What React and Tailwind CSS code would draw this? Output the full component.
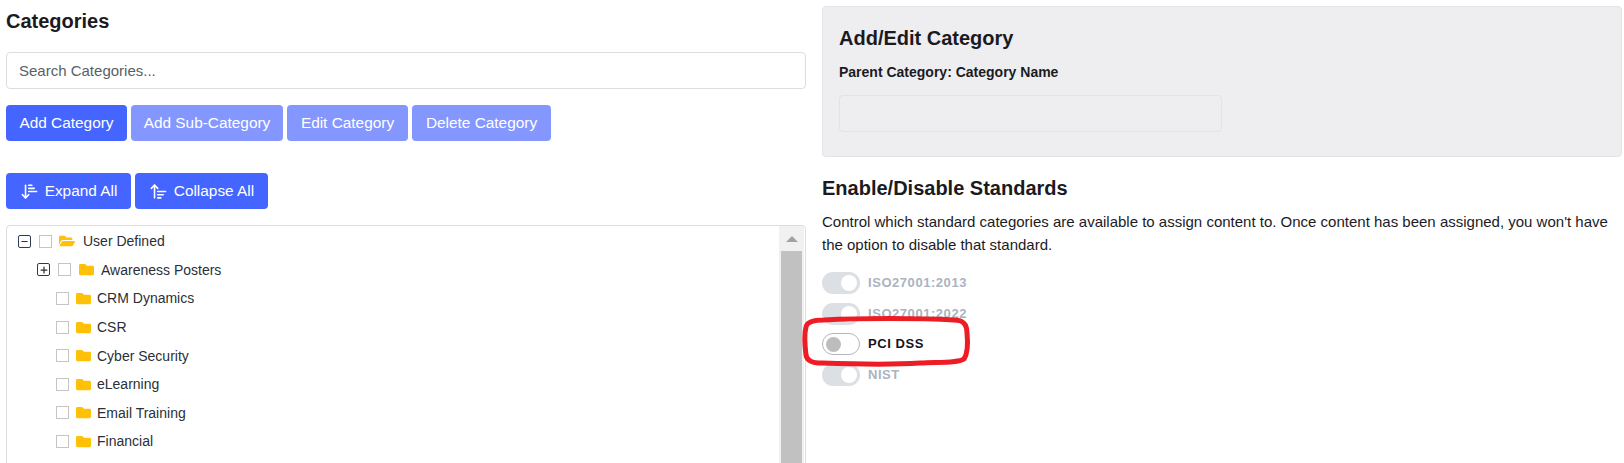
import React from "react";
import { ArrowDownNarrowWide, ArrowUpWideNarrow, Minus, Plus } from "lucide-react";
import { FaFolder, FaFolderOpen } from "react-icons/fa";

const items = ["CRM Dynamics", "CSR", "Cyber Security", "eLearning", "Email Training", "Financial"];
const standards = [
  { name: "ISO27001:2013", on: true },
  { name: "ISO27001:2022", on: true },
  { name: "PCI DSS", on: false },
  { name: "NIST", on: true },
];

const Btn = ({ children, faded, className }) => (
  <button
    className={`h-9 rounded text-white text-[15.4px] flex items-center justify-center gap-1.5 ${
      faded ? "bg-[#8497ff]" : "bg-[#4465ff]"
    } ${className}`}
  >
    {children}
  </button>
);

const Box = ({ className = "" }) => (
  <span className={`w-[13px] h-[13px] border border-[#c4c4c4] bg-white shrink-0 ${className}`} />
);

const Toggler = ({ open }) => (
  <span className="w-[13px] h-[13px] border border-[#2f3b52] rounded-[2px] flex items-center justify-center shrink-0">
    {open ? <Minus size={9} strokeWidth={3} /> : <Plus size={10} strokeWidth={3} />}
  </span>
);

const Standard = ({ name, on }) => (
  <div className="flex items-center gap-2 h-[22px]">
    {on ? (
      <span className="w-[38px] h-[22px] rounded-full bg-[#dcdfe4] flex items-center justify-end pr-[3px]">
        <span className="w-4 h-4 rounded-full bg-white" />
      </span>
    ) : (
      <span className="w-[38px] h-[22px] rounded-full bg-white border border-[#b4b7bd] flex items-center pl-[3px]">
        <span className="w-[15px] h-[15px] rounded-full bg-[#bdbdbd]" />
      </span>
    )}
    <span className={`text-[13px] font-bold tracking-[0.55px] ${on ? "text-[#aab4c1]" : "text-[#14141f]"}`}>{name}</span>
  </div>
);

export default function App() {
  return (
    <div className="relative h-[463px] overflow-hidden bg-white text-[#1b1b1f] font-['Liberation_Sans',Arial,sans-serif] flex gap-4 pl-1.5 pr-0.5 pt-1.5">
      {/* Left column */}
      <div className="w-[800px] shrink-0">
        <h2 className="text-xl font-bold leading-[30px]">Categories</h2>
        <input
          placeholder="Search Categories..."
          className="mt-[16px] w-full h-[37px] px-3 border border-[#dcdde2] rounded text-[15px] outline-none placeholder:text-[#5a5f66]"
        />
        <div className="flex gap-1 mt-[16px]">
          <Btn className="w-[121px]">Add Category</Btn>
          <Btn faded className="w-[152px]">Add Sub-Category</Btn>
          <Btn faded className="w-[121px]">Edit Category</Btn>
          <Btn faded className="w-[139px]">Delete Category</Btn>
        </div>
        <div className="flex gap-1 mt-8">
          <Btn className="w-[125px]">
            <ArrowDownNarrowWide size={19} strokeWidth={2} />
            Expand All
          </Btn>
          <Btn className="w-[133px]">
            <ArrowUpWideNarrow size={19} strokeWidth={2} />
            Collapse All
          </Btn>
        </div>

        {/* Tree */}
        <div className="mt-4 h-[300px] border border-[#dcdde2] rounded-sm flex text-sm text-[#2b2f36]">
          <div className="flex-1 pt-[1px]">
            <div className="flex items-center h-[28.6px] pl-[11px]">
              <Toggler open />
              <Box className="ml-2" />
              <FaFolderOpen className="text-[#ffc107] text-base ml-[7px]" />
              <span className="ml-2">User Defined</span>
            </div>
            <div className="flex items-center h-[28.6px] pl-[30px]">
              <Toggler />
              <Box className="ml-2" />
              <FaFolder className="text-[#ffc107] text-[15px] ml-2" />
              <span className="ml-[7px]">Awareness Posters</span>
            </div>
            {items.map((name) => (
              <div key={name} className="flex items-center h-[28.6px] pl-[49px]">
                <Box />
                <FaFolder className="text-[#ffc107] text-[15px] ml-[7px]" />
                <span className="ml-1.5">{name}</span>
              </div>
            ))}
          </div>
          {/* Scrollbar */}
          <div className="w-[25px] mr-[1px] bg-[#f1f1f1] flex flex-col items-center">
            <div className="h-[25px] flex items-center justify-center">
              <div className="w-0 h-0 border-x-[6px] border-x-transparent border-b-[6px] border-b-[#a3a3a3]" />
            </div>
            <div className="w-[21px] flex-1 bg-[#c1c1c1]" />
          </div>
        </div>
      </div>

      {/* Right column */}
      <div className="w-[800px] shrink-0">
        <div className="h-[151px] bg-[#eeeef1] border border-[#e2e2e8] rounded px-4 pt-[15px]">
          <h3 className="text-xl font-bold leading-[32px]">Add/Edit Category</h3>
          <p className="text-sm font-bold mt-[10px] leading-4">Parent Category: Category Name</p>
          <div className="mt-[15px] w-[383px] h-[37px] border border-[#e2e2e8] rounded" />
        </div>
        <h3 className="text-xl font-bold leading-[32px] mt-[15px]">Enable/Disable Standards</h3>
        <p className="text-[15px] leading-[23px] mt-[6px] w-[800px]">
          Control which standard categories are available to assign content to. Once content has been assigned, you won't have the option to disable that standard.
        </p>
        <div className="mt-[16px] flex flex-col gap-[8.5px]">
          {standards.map((s) => (
            <Standard key={s.name} name={s.name} on={s.on} />
          ))}
        </div>
      </div>

      {/* Hand drawn annotation */}
      <svg className="absolute left-[800px] top-[315px]" width="172" height="54" viewBox="0 0 172 54" fill="none">
        <path
          d="M24 5 C60 3 120 3 154 5 C163 5 167 9 167 18 C168 28 168 38 164 44 C158 48 140 47 120 48 C90 50 50 49 22 48 C12 48 7 46 6 40 C5 32 4 20 6 12 C7 7 14 5 24 5 Z"
          stroke="#ee1c25"
          strokeWidth="5"
        />
      </svg>
    </div>
  );
}
